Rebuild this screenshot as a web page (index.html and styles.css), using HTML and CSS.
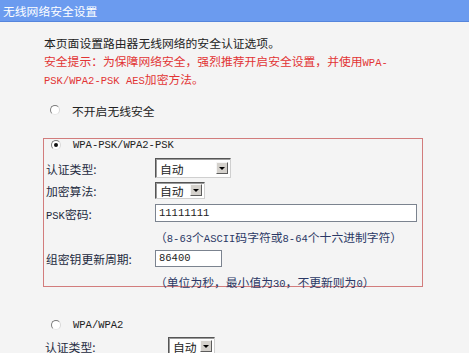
FILE: index.html
```html
<!DOCTYPE html>
<html lang="zh-CN">
  <head>
    <meta charset="UTF-8" />
    <meta name="viewport" content="width=device-width, initial-scale=1.0" />
    <title>无线网络安全设置</title>
    <link rel="stylesheet" href="styles.css">
  </head>
  <body>
    <div class="titlebar">无线网络安全设置</div>
    <div class="content">
      <p class="intro">本页面设置路由器无线网络的安全认证选项。</p>
      <p class="warn">
        安全提示：为保障网络安全，强烈推荐开启安全设置，并使用<span class="en">WPA-</span><br /><span class="en">PSK/WPA2-PSK AES</span>加密方法。
      </p>

      <div class="option"><span class="radio"></span>不开启无线安全</div>

      <div class="box">
        <div class="option option-in">
          <span class="radio checked"></span><span class="en">WPA-PSK/WPA2-PSK</span>
        </div>
        <div class="row row-auth">
          <span class="label">认证类型:</span>
          <span class="select select-wide">自动<i class="arrow"></i></span>
        </div>
        <div class="row row-enc">
          <span class="label">加密算法:</span>
          <span class="select select-small">自动<i class="arrow"></i></span>
        </div>
        <div class="row row-psk">
          <span class="label"><span class="en">PSK</span>密码:</span>
          <input class="field field-psk" type="text" value="11111111" />
        </div>
        <div class="row hint">
          <span class="label"></span>
          <span>（<span class="en">8-63</span>个<span class="en">ASCII</span>码字符或<span class="en">8-64</span>个十六进制字符）</span>
        </div>
        <div class="row row-group">
          <span class="label">组密钥更新周期:</span>
          <input class="field field-group" type="text" value="86400" />
        </div>
        <div class="row hint hint-last">
          <span class="label"></span>
          <span>（单位为秒，最小值为<span class="en">30</span>，不更新则为<span class="en">0</span>）</span>
        </div>
      </div>

      <div class="option option-low">
        <span class="radio"></span><span class="en">WPA/WPA2</span>
      </div>
      <div class="row row-low">
        <span class="label label-low">认证类型:</span>
        <span class="select select-low">自动<i class="arrow"></i></span>
      </div>
    </div>
  </body>
</html>
```

FILE: styles.css
```css
body {
  font-family: "Noto Sans CJK SC", "Liberation Sans", sans-serif;
  font-size: 11.8px;
  margin: 0;
  padding: 0;
  background: #f4f4f4;
  color: #222;
  overflow: hidden;
}

.en {
  font-family: "Liberation Mono", "Noto Sans CJK SC", monospace;
  font-size: 10.5px;
  line-height: 10px;
}

.titlebar {
  height: 21px;
  line-height: 21px;
  padding-left: 3px;
  background: #6b9bef;
  border-bottom: 1px solid #5585dc;
  color: #fff;
}

.content {
  padding: 12px 0 0 43px;
}

.intro,
.warn {
  margin: 0;
  padding-left: 1px;
  line-height: 18px;
}

.warn {
  color: #e23434;
}

.option {
  display: flex;
  align-items: center;
  gap: 12px;
  margin-top: 13px;
  padding-left: 7px;
  height: 18px;
}

.radio {
  width: 10px;
  height: 10px;
  box-sizing: border-box;
  border-radius: 50%;
  border: 1px solid;
  border-color: #7a7a7a #d8d8d8 #e6e6e6 #7a7a7a;
  background: #fff;
  display: flex;
  align-items: center;
  justify-content: center;
}

.radio.checked::after {
  content: "";
  width: 4px;
  height: 4px;
  border-radius: 50%;
  background: #111;
}

.box {
  margin-top: 19px;
  width: 380px;
  box-sizing: border-box;
  border: 1px solid #d27c7c;
  padding-left: 2px;
}

.option-in {
  margin-top: 0;
  height: 12px;
  padding-left: 5px;
}

.row {
  display: flex;
  align-items: center;
}

.label {
  width: 109px;
  flex-shrink: 0;
  color: #232a3e;
}

.row-auth {
  margin-top: 6px;
  height: 22px;
}

.row-enc {
  height: 22px;
}

.row-psk {
  height: 24px;
}

.hint {
  height: 23px;
  color: #2b3865;
}

.row-group {
  height: 20px;
}

.hint-last {
  height: 18px;
  box-sizing: border-box;
  padding-top: 7px;
  line-height: 14px;
  align-items: flex-start;
}

.select {
  display: flex;
  align-items: center;
  justify-content: space-between;
  box-sizing: border-box;
  background: #fff;
  border: 1px solid;
  border-color: #555 #cfcfcf #cfcfcf #555;
  box-shadow: inset 1px 1px 0 #9a9a9a;
  padding: 0 2px 0 4px;
  color: #222;
}

.select-wide {
  width: 76px;
  height: 20px;
}

.select-small {
  width: 50px;
  height: 17px;
}

.select-low {
  width: 47px;
  height: 18px;
}

.arrow {
  width: 12px;
  height: 12px;
  box-sizing: border-box;
  background: #d4d1cc;
  border: 1px solid;
  border-color: #f6f6f6 #5c5c5c #5c5c5c #f6f6f6;
  display: flex;
  align-items: center;
  justify-content: center;
}

.arrow::after {
  content: "";
  border-left: 3px solid transparent;
  border-right: 3px solid transparent;
  border-top: 3px solid #000;
}

.field {
  box-sizing: border-box;
  margin: 0;
  padding: 0 0 0 3px;
  border: 1px solid #7b838f;
  background: #fff;
  color: #222;
  font-family: "Liberation Mono", monospace;
  font-size: 10.5px;
  outline: none;
}

.field-psk {
  width: 262px;
  height: 18px;
}

.field-group {
  width: 67px;
  height: 17px;
}

.option-low {
  margin-top: 29px;
  padding-left: 8px;
}

.row-low {
  margin-top: 3px;
  height: 18px;
}

.label-low {
  width: 125px;
  padding-left: 2px;
  box-sizing: border-box;
}
```
